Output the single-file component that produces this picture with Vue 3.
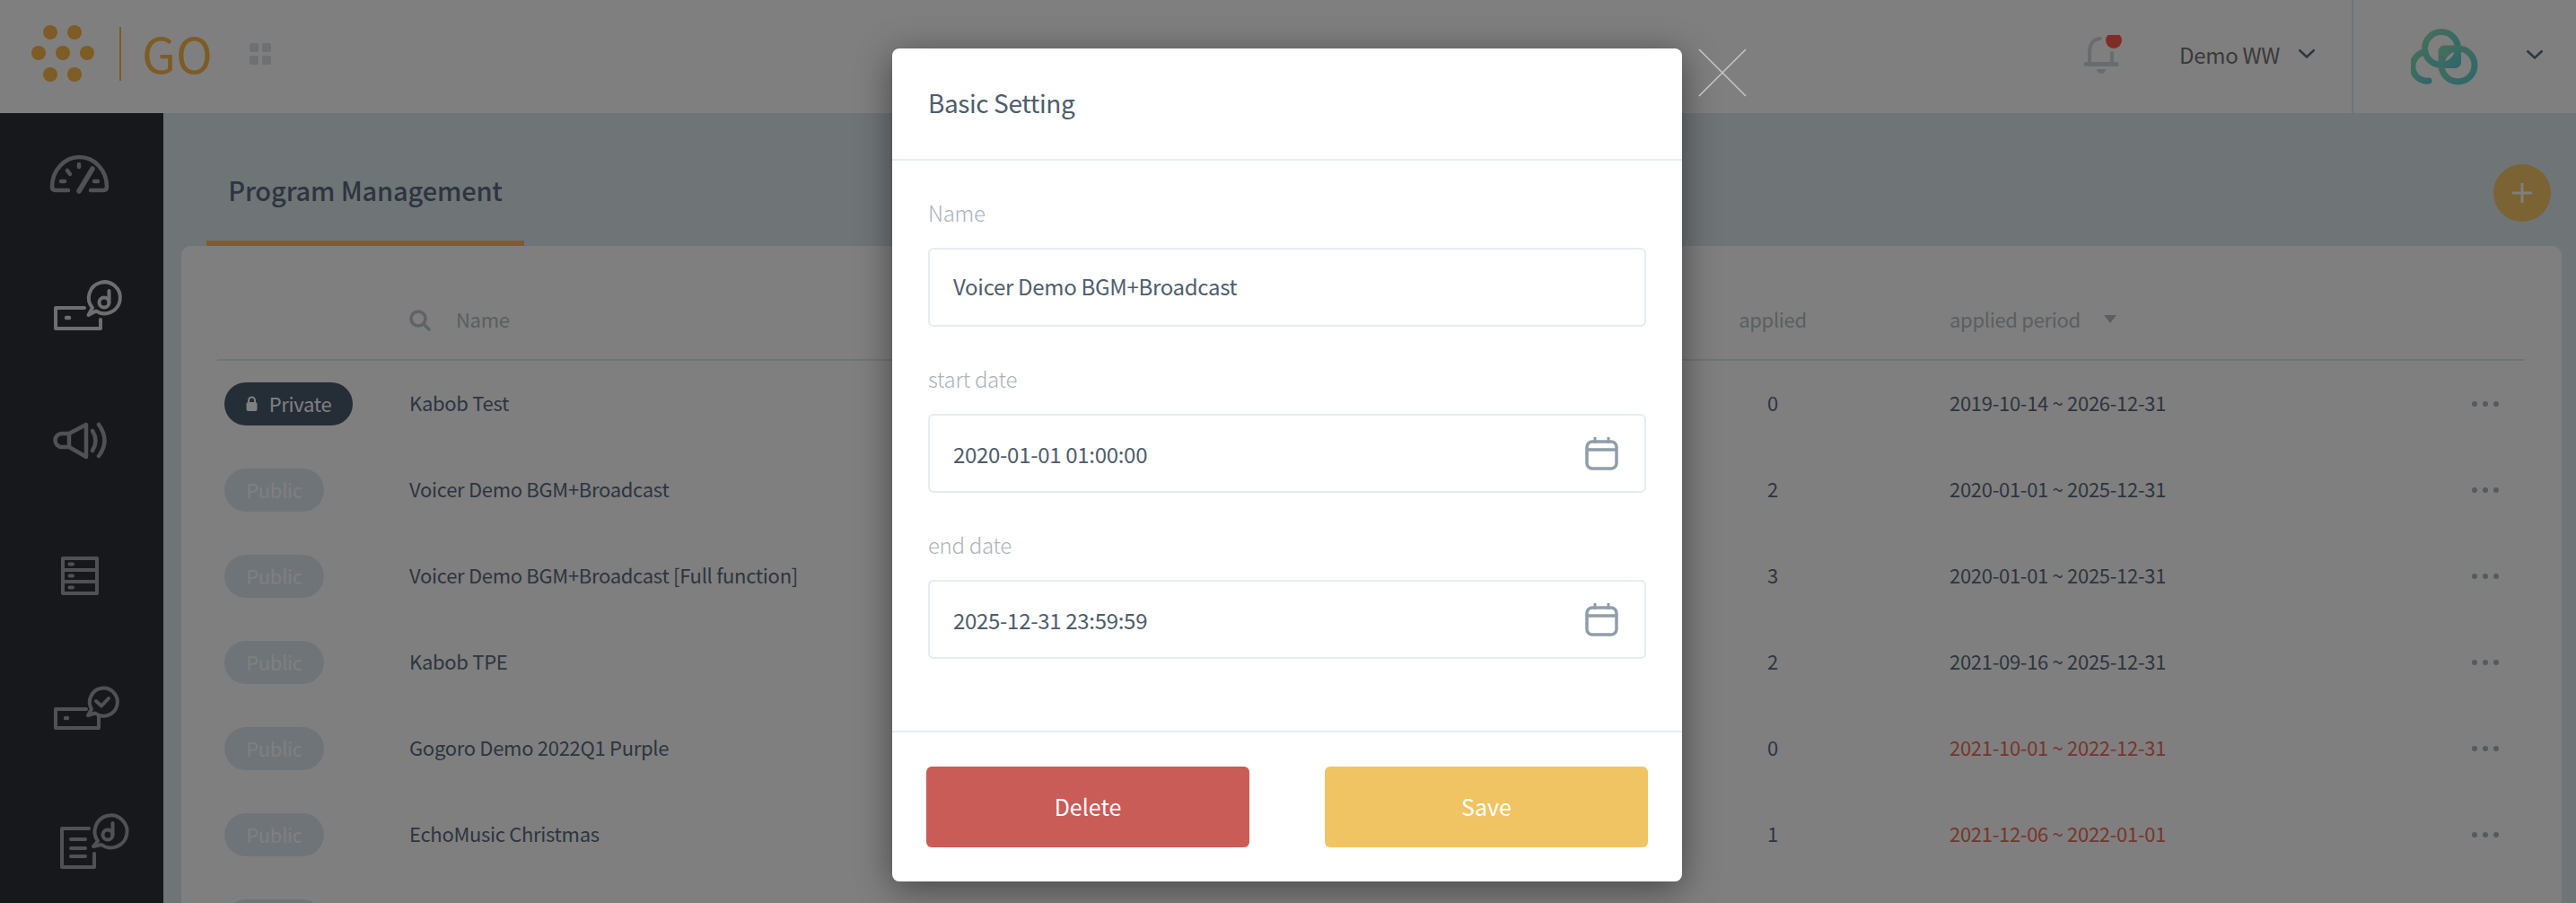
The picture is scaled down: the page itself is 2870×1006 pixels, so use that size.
<template>
  <div class="page">
    <header class="topbar">
      <div class="brand">
        <svg class="brand-mark" width="120" height="126" viewBox="0 0 120 126">
          <ellipse v-for="d in logoDots" :key="d[0] + '-' + d[1]" :cx="d[0]" :cy="d[1]" rx="8" ry="8" fill="#fbb94a" />
        </svg>
        <span class="brand-line"></span>
        <span class="brand-text">GO</span>
        <span class="apps"><i></i><i></i><i></i><i></i></span>
      </div>
      <div class="top-right">
        <svg class="bell" width="44" height="46" viewBox="2320 40 44 46" fill="none">
          <path d="M2340 44 Q2328 45 2328 60 V72 M2353 60 V72" stroke="#cfd9df" stroke-width="4" stroke-linecap="round" />
          <path d="M2324 72.5 H2358" stroke="#cfd9df" stroke-width="5" stroke-linecap="round" />
          <path d="M2336 78 H2346 A5 5 0 0 1 2336 78 Z" fill="#cfd9df" />
          <circle cx="2355" cy="46" r="9" fill="#ff5c4e" />
        </svg>
        <span class="user-name">Demo WW</span>
        <svg class="chevron" width="20" height="11" viewBox="0 0 20 11" fill="none">
          <path d="M1.5 1.5 L10 9.5 L18.5 1.5" stroke="#5d6c80" stroke-width="2.5" />
        </svg>
        <div class="account">
          <svg width="76" height="66" viewBox="2687 27 76 66" fill="none">
            <defs>
              <linearGradient id="ring" x1="0" y1="0" x2="1" y2="1">
                <stop offset="0" stop-color="#8fdcb4" />
                <stop offset="1" stop-color="#5ccfd4" />
              </linearGradient>
            </defs>
            <g stroke="url(#ring)" stroke-width="7" stroke-linecap="round" fill="none">
              <path d="M2707 87 A16 16 0 0 1 2703 55" />
              <circle cx="2721" cy="51" r="18.5" />
              <circle cx="2739.5" cy="69.5" r="18.5" />
              <rect x="2721" y="51" width="18.5" height="18.5" rx="3" />
            </g>
          </svg>
          <svg class="chevron" width="20" height="11" viewBox="0 0 20 11" fill="none">
            <path d="M1.5 1.5 L10 9.5 L18.5 1.5" stroke="#5d6c80" stroke-width="2.5" />
          </svg>
        </div>
      </div>
    </header>

    <div class="main">
      <aside class="sidebar">
        <!-- dashboard -->
        <svg class="nav-icon" viewBox="0 126 182 150" fill="none" stroke="#a2a3a6" stroke-width="4.5" stroke-linecap="round" stroke-linejoin="round">
          <path d="M76 212 H62 Q58 212 58 208 A30.5 33 0 0 1 119 208 Q119 212 115 212 H101" />
          <path d="M88 213 L103 188" stroke-width="5.5" />
          <path d="M68 202 H72 M75 190 L78 194 M88 183 V186 M105 202 H109" />
        </svg>
        <!-- device + music -->
        <svg class="nav-icon" viewBox="0 276 182 150" fill="none" stroke="#dcdcdc" stroke-width="4" stroke-linecap="round" stroke-linejoin="round">
          <path d="M94 343 H62 V366 H112 V356" />
          <path d="M74 354 H77" stroke-width="4.5" />
          <path d="M103 343 L98.5 351 L107 346.5 A17.5 17.5 0 1 0 103 343 Z" />
          <circle cx="116" cy="337" r="5.5" />
          <path d="M121.5 337 V324" />
        </svg>
        <!-- speaker -->
        <svg class="nav-icon" viewBox="0 426 182 150" fill="none" stroke="#a2a3a6" stroke-width="4.5" stroke-linecap="round" stroke-linejoin="round">
          <path d="M96 473 V509 L77 498 V483 Z M77 483 H69 A7.5 7.5 0 0 0 69 498 H77" />
          <path d="M103 480 Q110 491 103 502" />
          <path d="M110 473 Q123 491 110 508" />
        </svg>
        <!-- server -->
        <svg class="nav-icon" viewBox="0 576 182 150" fill="none" stroke="#a2a3a6" stroke-width="4" stroke-linejoin="round">
          <path d="M70 622 H108 V661 H70 Z M70 635 H108 M70 648 H108" />
          <path d="M77.5 628.5 H81 M77.5 641.5 H81 M77.5 654.5 H81" stroke-linecap="round" />
        </svg>
        <!-- device + check -->
        <svg class="nav-icon" viewBox="0 726 182 150" fill="none" stroke="#a2a3a6" stroke-width="4" stroke-linecap="round" stroke-linejoin="round">
          <path d="M96 790 H62 V811 H110 V798" />
          <path d="M73 800 H75" stroke-width="4.5" />
          <path d="M102 790 L98 797 L106 794.5 A15.5 15.5 0 1 0 102 790 Z" />
          <path d="M107 781 L113 786.5 L121 778" stroke-width="4" />
        </svg>
        <!-- list + music -->
        <svg class="nav-icon" viewBox="0 876 182 150" fill="none" stroke="#a2a3a6" stroke-width="4" stroke-linecap="round" stroke-linejoin="round">
          <path d="M99 923 H69 V966 H105 V951" />
          <path d="M79 935 H95 M79 945 H95 M79 954 H95" />
          <path d="M109 937 L104 943 L113 941 A18 18 0 1 0 109 937 Z" />
          <circle cx="120" cy="930" r="5.5" />
          <path d="M125.5 930 V917" />
        </svg>
      </aside>

      <section class="content">
        <div class="tabs">
          <div class="tab">Program Management</div>
          <button class="add" type="button">
            <svg width="22" height="22" viewBox="0 0 22 22"><path d="M11 0 V22 M0 11 H22" stroke="#fff" stroke-width="3" /></svg>
          </button>
        </div>
        <div class="card">
          <div class="row head">
            <span></span>
            <span class="name-head">
              <svg width="24" height="24" viewBox="0 0 24 24" fill="none" stroke="#b9c8cc" stroke-width="3.5">
                <circle cx="10" cy="10" r="8" />
                <path d="M16 16 L22 22" stroke-linecap="round" />
              </svg>
              <span class="cell">Name</span>
            </span>
            <span class="cell center">applied</span>
            <span class="cell period">applied period<i class="caret"></i></span>
            <span></span>
          </div>
          <div class="row" v-for="(p, i) in programs" :key="i">
            <span>
              <span class="pill" :class="{ dark: p.priv }">
                <svg v-if="p.priv" width="13" height="18" viewBox="0 0 13 18">
                  <path d="M3 8 V5 A3.5 3.5 0 0 1 10 5 V8" fill="none" stroke="#fff" stroke-width="2" />
                  <rect x="0.5" y="7" width="12" height="10" rx="2" fill="#fff" />
                </svg>
                <span class="pill-text" v-if="p.name">{{ p.priv ? 'Private' : 'Public' }}</span>
              </span>
            </span>
            <span class="cell">{{ p.name }}</span>
            <span class="cell center">{{ p.applied }}</span>
            <span class="cell period" :class="{ expired: p.expired }">{{ p.period }}</span>
            <span class="dots"><i></i><i></i><i></i></span>
          </div>
        </div>
      </section>
    </div>

    <div class="overlay">
      <div class="modal">
        <svg class="close" width="54" height="54" viewBox="0 0 54 54">
          <path d="M1 1 L53 53 M53 1 L1 53" stroke="#c4c4c4" stroke-width="1.6" />
        </svg>
        <div class="modal-head"><span>Basic Setting</span></div>
        <form class="modal-body" @submit.prevent>
          <div class="field" v-for="f in fields" :key="f.label">
            <label>{{ f.label }}</label>
            <div class="input-box">
              <span :class="{ 'plain-value': !f.date }">{{ f.value }}</span>
              <svg v-if="f.date" width="37" height="37" viewBox="0 0 37 37" fill="none" stroke="#909eaa" stroke-width="3.5">
                <rect x="2" y="5" width="33" height="30" rx="6" />
                <path d="M2 14 H35" />
                <path d="M11 0 V7 M26 0 V7" stroke-width="3" />
              </svg>
            </div>
          </div>
        </form>
        <div class="modal-foot">
          <button class="btn delete" type="button">Delete</button>
          <button class="btn save" type="button">Save</button>
        </div>
      </div>
    </div>
  </div>
</template>

<script setup>
const logoDots = [
  [56, 36], [83, 36],
  [43, 59], [70, 59], [97, 59],
  [56, 83], [83, 83]
];

const programs = [
  { priv: true, name: 'Kabob Test', applied: 0, period: '2019-10-14 ~ 2026-12-31' },
  { name: 'Voicer Demo BGM+Broadcast', applied: 2, period: '2020-01-01 ~ 2025-12-31' },
  { name: 'Voicer Demo BGM+Broadcast [Full function]', applied: 3, period: '2020-01-01 ~ 2025-12-31' },
  { name: 'Kabob TPE', applied: 2, period: '2021-09-16 ~ 2025-12-31' },
  { name: 'Gogoro Demo 2022Q1 Purple', applied: 0, period: '2021-10-01 ~ 2022-12-31', expired: true },
  { name: 'EchoMusic Christmas', applied: 1, period: '2021-12-06 ~ 2022-01-01', expired: true },
  { name: '', applied: '', period: '' } // only the top of this row's pill is on screen
];

const fields = [
  { label: 'Name', value: 'Voicer Demo BGM+Broadcast' },
  { label: 'start date', value: '2020-01-01 01:00:00', date: true },
  { label: 'end date', value: '2025-12-31 23:59:59', date: true }
];
</script>

<style>
html, body {
  margin: 0;
  background: #fff;
}
</style>

<style scoped>
.page {
  position: relative;
  width: 2870px;
  height: 1006px;
  overflow: hidden;
  display: flex;
  flex-direction: column;
  font-family: "Noto Sans CJK TC", "Noto Sans", sans-serif;
  font-size: 22px;
  letter-spacing: -0.3px;
  color: #5a6b7e;
  background: #dfe8ee;
}

.topbar {
  height: 126px;
  flex: none;
  display: flex;
  justify-content: space-between;
  background: #fff;
}
.brand {
  display: flex;
  align-items: center;
}
.brand-mark {
  display: block;
}
.brand-line {
  width: 2px;
  height: 60px;
  margin: 0 0 6px 13px;
  background: #fbb94a;
}
.brand-text {
  margin: 0 0 10px 23px;
  font-size: 55px;
  font-weight: 400;
  line-height: 1;
  letter-spacing: 0;
  color: #fbb94a;
}
.apps {
  display: grid;
  grid-template-columns: 10px 10px;
  gap: 4px;
  margin: 0 0 6px 41px;
}
.apps i {
  width: 10px;
  height: 10px;
  border-radius: 2px;
  background: #dfe0e4;
}
.top-right {
  display: flex;
  align-items: center;
}
.bell {
  display: block;
  margin-top: -2px;
}
.user-name {
  margin: 0 0 6px 64px;
  font-size: 24px;
  color: #747474;
}
.chevron {
  display: block;
}
.user-name + .chevron {
  margin-left: 20px;
  margin-top: -7px;
}
.account {
  display: flex;
  align-items: center;
  height: 100%;
  margin-left: 40px;
  padding: 0 36px 0 64px;
  border-left: 2px solid #dfe8ee;
  box-sizing: border-box;
}
.account .chevron {
  margin-left: 52px;
  margin-top: -6px;
}

.main {
  flex: 1;
  display: flex;
  min-height: 0;
}
.sidebar {
  width: 182px;
  flex: none;
  background: #2c3038;
}
.nav-icon {
  display: block;
  width: 182px;
  height: 150px;
}

.content {
  flex: 1;
  min-width: 0;
  padding: 0 16px 0 20px;
}
.tabs {
  height: 148px;
  display: flex;
  justify-content: space-between;
  align-items: flex-end;
}
.tab {
  margin-left: 28px;
  width: 354px;
  height: 90px;
  box-sizing: border-box;
  border-bottom: 6px solid #fdbb4c;
  text-align: center;
  line-height: 54px;
  font-size: 29px;
  font-weight: 500;
  letter-spacing: -0.15px;
  color: #5a6b7e;
}
.add {
  width: 64px;
  height: 64px;
  margin: 0 12px 27px 0;
  padding: 0;
  border: none;
  border-radius: 50%;
  display: flex;
  align-items: center;
  justify-content: center;
  background: #f6c666;
}
.card {
  padding: 40px 41px 0 40px;
  height: 760px;
  box-sizing: border-box;
  background: #fff;
  border-radius: 10px 10px 0 0;
}
.row {
  display: grid;
  grid-template-columns: 214px 1fr 150px 704px 59px;
  align-items: center;
  height: 96px;
}
.row.head {
  height: 88px;
  border-bottom: 2px solid #dfe8ee;
  box-sizing: border-box;
  color: #b4bfc4;
}
.name-head {
  display: flex;
  align-items: center;
  gap: 28px;
}
.cell {
  padding-bottom: 4px;
}
.center {
  text-align: center;
}
.period {
  padding-left: 122px;
  display: flex;
  align-items: center;
}
.expired {
  color: #f06a56;
}
.caret {
  width: 0;
  height: 0;
  margin-left: 26px;
  border-left: 7px solid transparent;
  border-right: 7px solid transparent;
  border-top: 9px solid #b4bfc4;
}
.pill {
  display: inline-flex;
  align-items: center;
  justify-content: center;
  gap: 13px;
  margin-left: 8px;
  width: 111px;
  height: 48px;
  border-radius: 24px;
  background: #dfe9f0;
  color: #fff;
  vertical-align: middle;
}
.pill-text {
  padding-bottom: 3px;
}
.pill.dark {
  width: 143px;
  background: #4b5a6c;
}
.dots {
  display: flex;
  gap: 6px;
}
.dots i {
  width: 6px;
  height: 6px;
  border-radius: 50%;
  background: #aab4ba;
}

.overlay {
  position: absolute;
  inset: 0;
  display: flex;
  justify-content: center;
  align-items: flex-start;
  padding: 54px 2px 0 0;
  box-sizing: border-box;
  background: rgba(0, 0, 0, 0.5);
}
.modal {
  position: relative;
  width: 880px;
  background: #fff;
  border-radius: 8px;
  box-shadow: 0 8px 40px rgba(0, 0, 0, 0.45);
  color: #4e5d6c;
  font-size: 24px;
}
.close {
  position: absolute;
  left: 100%;
  top: 0;
  margin-left: 18px;
}
.modal-head {
  height: 119px;
  padding: 0 0 4px 40px;
  display: flex;
  align-items: center;
  border-bottom: 2px solid #e3edf3;
  font-size: 28px;
  letter-spacing: -0.4px;
}
.modal-body {
  padding: 39px 40px 41px;
}
.field {
  margin-bottom: 39px;
}
.field label {
  display: block;
  height: 40px;
  line-height: 37px;
  margin-bottom: 18px;
  font-weight: 300;
  color: #a9b3bb;
}
.input-box {
  height: 88px;
  box-sizing: border-box;
  display: flex;
  align-items: center;
  justify-content: space-between;
  padding: 0 29px 0 26px;
  border: 2px solid #e3edf3;
  border-radius: 6px;
}
.plain-value {
  padding-bottom: 3px;
}
.modal-foot {
  display: flex;
  justify-content: space-between;
  padding: 38px 38px 38px;
  border-top: 2px solid #e3edf3;
}
.btn {
  width: 360px;
  height: 90px;
  padding: 0 0 3px;
  border: none;
  border-radius: 6px;
  color: #fff;
  font-family: inherit;
  font-size: 25px;
}
.delete {
  background: #c95c56;
}
.save {
  background: #f0c462;
}
</style>
